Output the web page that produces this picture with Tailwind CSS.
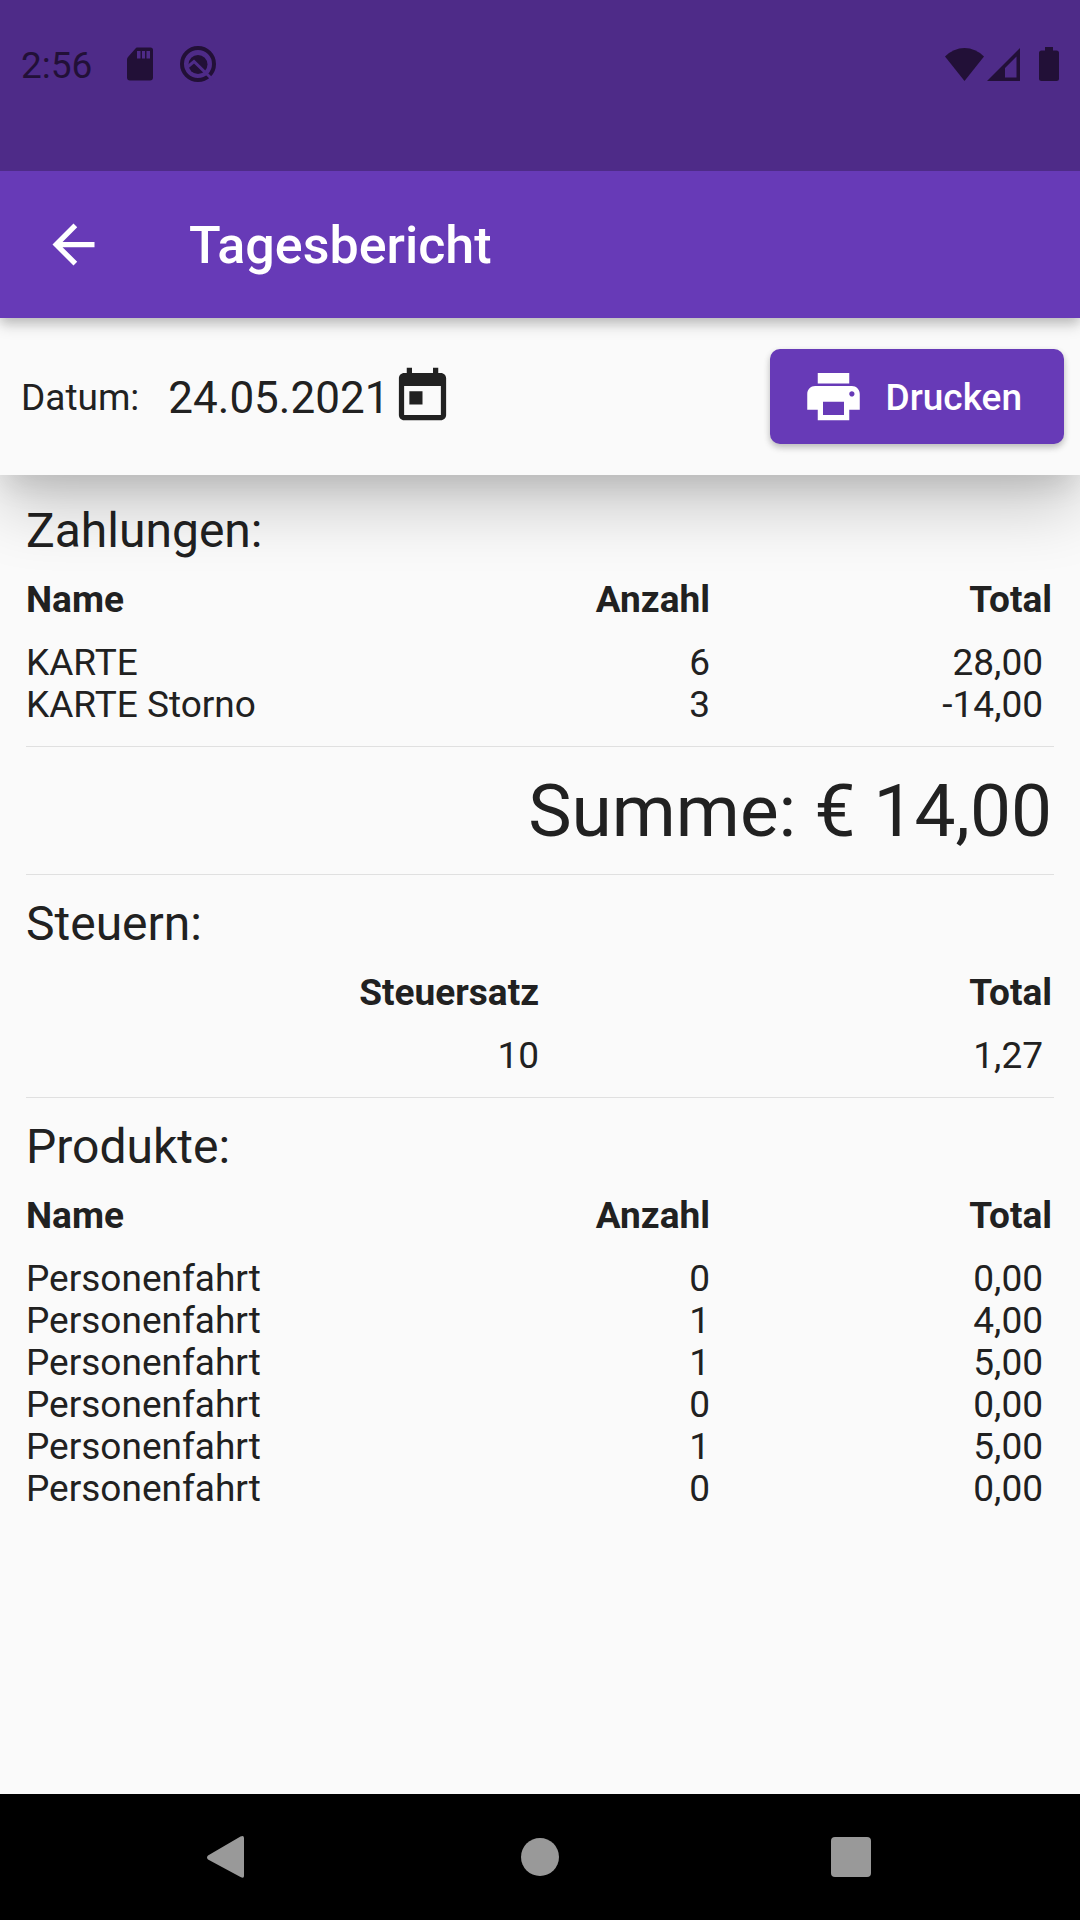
<!DOCTYPE html>
<html lang="de">
<head>
    <meta charset="UTF-8">
    <meta name="viewport" content="width=device-width, initial-scale=1.0">
    <title>Tagesbericht</title>
    <script src="https://cdn.jsdelivr.net/npm/@tailwindcss/browser@4"></script>
</head>
<body class="min-h-screen flex flex-col bg-[#fafafa] text-[#212121] text-[37px] leading-[42px] font-[Roboto,sans-serif]">

    <!-- Status bar -->
    <div class="relative z-30 h-[171px] px-[21px] pt-[43px] flex items-start justify-between bg-[#4e2b88] text-[#221037]">
        <div class="flex items-center h-[42px]">
            <span class="mt-[4px]">2:56</span>
            <!-- SD card -->
            <svg class="w-[26px] h-[34px] ml-[35px]" viewBox="0 0 26 34" fill="currentColor">
                <path fill-rule="evenodd" d="M10 0.500H23.500Q26 0.500 26 3V30.500Q26 33.500 23 33.500H3Q0 33.500 0 30.500V12.500Q0 11 1 10L8.500 1.500Q9.200 .5 10 .5ZM10 4V11.500H13.500V4ZM15 4V11.500H18V4ZM19.500 4V11.500H23V4Z"></path>
            </svg>
            <svg class="w-[36px] h-[36px] ml-[27px]" viewBox="0 0 36 36" fill="none">
                <circle cx="18" cy="18" r="16" stroke="currentColor" stroke-width="4"></circle>
                <circle cx="18" cy="18.500" r="9.500" fill="currentColor"></circle>
                <path d="M7.500 21L14 15.500L33 34" stroke="#4e2b88" stroke-width="3"></path>
            </svg>
        </div>
        <div class="flex items-center h-[42px]">
            <svg class="w-[39px] h-[33px]" viewBox="0 0 39 33" fill="currentColor">
                <path d="M0 8.500Q8.500 0 19.500 0T39 8.500L19.500 33Z"></path>
            </svg>
            <svg class="w-[33px] h-[33px] ml-[3px]" viewBox="0 0 33 33" fill="currentColor">
                <path fill-rule="evenodd" d="M33 0V33H0ZM29.500 8.500L18 20V29.500H29.500Z"></path>
            </svg>
            <svg class="w-[20px] h-[34px] ml-[19px]" viewBox="0 0 20 34" fill="currentColor">
                <path d="M6 0H14V3.500H17.500Q20 3.500 20 6V31.500Q20 34 17.500 34H2.500Q0 34 0 31.500V6Q0 3.500 2.500 3.500H6Z"></path>
            </svg>
        </div>
    </div>

    <!-- App bar -->
    <header class="relative z-20 h-[147px] pl-[42px] flex items-center bg-[#673ab7] text-white shadow-[0_4px_10px_#00000024,0_8px_14px_#00000024]">
        <a href="#" aria-label="Zurück">
            <svg class="w-[63px] h-[63px]" viewBox="0 0 24 24" fill="currentColor">
                <path d="M20 11H7.830l5.590-5.590L12 4l-8 8 8 8 1.410-1.410L7.830 13H20v-2z"></path>
            </svg>
        </a>
        <h1 class="ml-[84px] pt-[2px] text-[52px] leading-[60px] font-medium">Tagesbericht</h1>
    </header>

    <!-- Date + print -->
    <form class="relative z-10 py-[31px] pl-[21px] pr-[16px] flex items-center bg-[#fafafa] shadow-[0_16px_26px_-6px_#0000001a,0_32px_66px_#00000033]">
        <label for="datum" class="pt-[2px]">Datum:</label>
        <input id="datum" type="text" value="24.05.2021" class="ml-[29px] pt-[2px] w-[223px] text-[44px] leading-[52px] outline-none">
        <button type="button" aria-label="Datum wählen">
            <svg class="w-[63px] h-[63px]" viewBox="0 0 24 24" fill="currentColor">
                <path d="M19 3h-1V1h-2v2H8V1H6v2H5c-1.110 0-1.990.9-1.990 2L3 19c0 1.100.89 2 2 2h14c1.100 0 2-.9 2-2V5c0-1.100-.9-2-2-2zm0 16H5V8h14v11zM7 10h5v5H7z"></path>
            </svg>
        </button>
        <button type="button" class="ml-auto h-[95px] pl-[32px] pr-[42px] flex items-center gap-[21px] rounded-[10px] bg-[#673ab7] text-white font-medium shadow-[0_3px_6px_#00000033,0_4px_8px_#00000014]">
            <svg class="w-[63px] h-[63px]" viewBox="0 0 24 24" fill="currentColor">
                <path d="M19 8H5c-1.660 0-3 1.340-3 3v6h4v4h12v-4h4v-6c0-1.660-1.340-3-3-3zm-3 11H8v-5h8v5zm3-7c-.55 0-1-.45-1-1s.45-1 1-1 1 .45 1 1-.45 1-1 1zm-1-9H6v4h12V3z"></path>
            </svg>
            <span class="pt-[2px]">Drucken</span>
        </button>
    </form>

    <!-- Report -->
    <main class="grow px-[26px] pt-[28px]">
        <section class="pr-[2px]">
            <h2 class="mb-[20px] text-[48px] leading-[56px]">Zahlungen:</h2>
            <table class="w-full table-fixed text-right">
                <thead>
                    <tr>
                        <th class="pb-[21px] text-left font-bold">Name</th>
                        <th class="pb-[21px] font-bold">Anzahl</th>
                        <th class="pb-[21px] font-bold">Total</th>
                    </tr>
                </thead>
                <tbody>
                    <tr><td class="text-left">KARTE</td><td>6</td><td class="pr-[9px]">28,00</td></tr>
                    <tr><td class="text-left">KARTE Storno</td><td>3</td><td class="pr-[9px]">-14,00</td></tr>
                </tbody>
            </table>
        </section>
        <hr class="mt-[20px] mb-[21px] border-[#e0e0e0]">
        <p class="pr-[2px] text-right text-[73px] leading-[86px]">Summe: € 14,00</p>
        <hr class="mt-[20px] mb-[21px] border-[#e0e0e0]">
        <section class="pr-[2px]">
            <h2 class="mb-[20px] text-[48px] leading-[56px]">Steuern:</h2>
            <table class="w-full table-fixed text-right">
                <thead>
                    <tr>
                        <th class="pb-[21px] font-bold">Steuersatz</th>
                        <th class="pb-[21px] font-bold">Total</th>
                    </tr>
                </thead>
                <tbody>
                    <tr><td>10</td><td class="pr-[9px]">1,27</td></tr>
                </tbody>
            </table>
        </section>
        <hr class="mt-[20px] mb-[21px] border-[#e0e0e0]">
        <section class="pr-[2px]">
            <h2 class="mb-[20px] text-[48px] leading-[56px]">Produkte:</h2>
            <table class="w-full table-fixed text-right">
                <thead>
                    <tr>
                        <th class="pb-[21px] text-left font-bold">Name</th>
                        <th class="pb-[21px] font-bold">Anzahl</th>
                        <th class="pb-[21px] font-bold">Total</th>
                    </tr>
                </thead>
                <tbody>
                    <tr><td class="text-left">Personenfahrt</td><td>0</td><td class="pr-[9px]">0,00</td></tr>
                    <tr><td class="text-left">Personenfahrt</td><td>1</td><td class="pr-[9px]">4,00</td></tr>
                    <tr><td class="text-left">Personenfahrt</td><td>1</td><td class="pr-[9px]">5,00</td></tr>
                    <tr><td class="text-left">Personenfahrt</td><td>0</td><td class="pr-[9px]">0,00</td></tr>
                    <tr><td class="text-left">Personenfahrt</td><td>1</td><td class="pr-[9px]">5,00</td></tr>
                    <tr><td class="text-left">Personenfahrt</td><td>0</td><td class="pr-[9px]">0,00</td></tr>
                </tbody>
            </table>
        </section>
    </main>

    <!-- System navigation -->
    <nav class="h-[126px] px-[73px] flex items-center bg-black text-[#999999]">
        <button type="button" aria-label="Zurück" class="flex-1 flex justify-center">
            <svg class="w-[44px] h-[44px]" viewBox="0 0 44 44" fill="currentColor">
                <path d="M1 20.500L33.500 1.500Q37 0 37 3V41Q37 44 33.500 42L1 24.500Q-1 22.500 1 20.500Z"></path>
            </svg>
        </button>
        <button type="button" aria-label="Startseite" class="flex-1 flex justify-center">
            <span class="w-[38px] h-[38px] rounded-full bg-[#999999]"></span>
        </button>
        <button type="button" aria-label="Übersicht" class="flex-1 flex justify-center">
            <span class="w-[40px] h-[40px] rounded-[4px] bg-[#999999]"></span>
        </button>
    </nav>
</body>
</html>
